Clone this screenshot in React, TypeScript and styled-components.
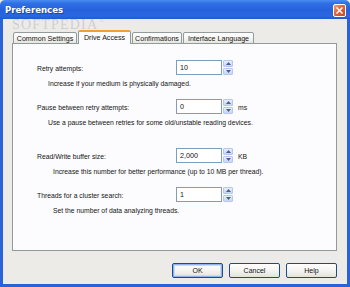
import React from "react";
import styled, { createGlobalStyle } from "styled-components";

const GlobalStyle = createGlobalStyle`
  html, body {
    margin: 0;
    padding: 0;
    background: #ecebe8;
  }
  * {
    box-sizing: border-box;
  }
`;

const Window = styled.div`
  position: relative;
  width: 350px;
  height: 287px;
  display: flex;
  flex-direction: column;
  font-family: "Liberation Sans", Arial, sans-serif;
  font-size: 6.8px;
  color: #151515;
  overflow: hidden;
`;

const TitleBar = styled.div`
  height: 19px;
  flex-shrink: 0;
  display: flex;
  align-items: center;
  justify-content: space-between;
  padding: 0 4px 0 5px;
  background: linear-gradient(
    to bottom,
    #4a8cf0 0%,
    #2f70e6 18%,
    #2662dc 50%,
    #2a66de 85%,
    #2358cf 100%
  );
  border-radius: 5px 5px 0 0;
`;

const Title = styled.span`
  color: #ffffff;
  font-family: "DejaVu Sans", "Liberation Sans", sans-serif;
  font-weight: bold;
  font-size: 8.6px;
  line-height: 10px;
  text-shadow: 1px 1px 0 #1d43a0;
`;

const CloseButton = styled.div`
  width: 13px;
  height: 13px;
  flex-shrink: 0;
  border: 1px solid #ffffff;
  border-radius: 2px;
  background: linear-gradient(135deg, #f0a080 0%, #e0643a 45%, #c84820 100%);
  display: flex;
  align-items: center;
  justify-content: center;
  margin-top: 1px;
`;

const Watermark = styled.div`
  position: absolute;
  left: 12px;
  top: 16px;
  font-family: "Liberation Serif", serif;
  font-size: 14px;
  line-height: 11px;
  letter-spacing: 1.2px;
  color: rgba(170, 170, 175, 0.45);
  pointer-events: none;
  sup {
    font-size: 6px;
    margin-left: 1px;
  }
`;

const Body = styled.div`
  flex: 1;
  display: flex;
  flex-direction: column;
  padding: 11px 10px 0 9px;
  border-left: 3px solid #2a63d8;
  border-right: 3px solid #2a63d8;
  border-bottom: 3px solid #2a63d8;
  background: #ecebe8;
`;

const TabRow = styled.div`
  display: flex;
  align-items: flex-end;
  gap: 1px;
  padding-left: 1px;
  height: 14px;
  margin-bottom: -1px;
  position: relative;
  z-index: 1;
`;

const Tab = styled.div<{ $active?: boolean; $width: number }>`
  width: ${(p) => p.$width}px;
  height: ${(p) => (p.$active ? 14 : 12)}px;
  display: flex;
  align-items: center;
  justify-content: center;
  font-size: 7.1px;
  border: 1px solid #919b9c;
  border-bottom: ${(p) => (p.$active ? "none" : "1px solid #919b9c")};
  border-top: ${(p) => (p.$active ? "2px solid #f0a030" : "1px solid #919b9c")};
  border-radius: 2px 2px 0 0;
  background: ${(p) =>
    p.$active
      ? "#fcfcfe"
      : "linear-gradient(to bottom, #ffffff 0%, #f4f4f0 60%, #e6e6e0 100%)"};
  padding-top: ${(p) => (p.$active ? 0 : 1)}px;
  white-space: nowrap;
`;

const Panel = styled.div`
  height: 208px;
  border: 1px solid #919b9c;
  background: #fcfcfe;
  padding: 16px 0 0 24px;
  display: flex;
  flex-direction: column;
`;

const Group = styled.div<{ $gap: number }>`
  margin-top: ${(p) => p.$gap}px;
  display: flex;
  flex-direction: column;
`;

const Row = styled.div`
  display: flex;
  align-items: center;
  height: 15px;
`;

const Label = styled.span`
  width: 139px;
  flex-shrink: 0;
  padding-top: 1px;
`;

const Input = styled.div`
  width: 46px;
  height: 15px;
  border: 1px solid #7f9db9;
  background: #ffffff;
  display: flex;
  align-items: center;
  padding-left: 3px;
  font-size: 7.2px;
`;

const Spinner = styled.div`
  width: 10px;
  height: 15px;
  margin-left: 1px;
  display: flex;
  flex-direction: column;
  gap: 1px;
`;

const SpinHalf = styled.div`
  flex: 1;
  border: 1px solid #b6c8ee;
  border-radius: 1px;
  background: linear-gradient(to bottom, #e8effd 0%, #c6d5f6 100%);
  display: flex;
  align-items: center;
  justify-content: center;
`;

const Unit = styled.span`
  margin-left: 5px;
  padding-top: 1px;
`;

const Hint = styled.div<{ $indent: number }>`
  margin-top: 4px;
  padding-left: ${(p) => p.$indent}px;
  line-height: 10px;
  white-space: nowrap;
`;

const ButtonRow = styled.div`
  display: flex;
  justify-content: flex-end;
  gap: 6px;
  margin-top: 12px;
`;

const Button = styled.div<{ $default?: boolean }>`
  width: 51px;
  height: 15px;
  border: 1px solid #1e4a86;
  border-radius: 2px;
  font-size: 7px;
  background: linear-gradient(to bottom, #ffffff 0%, #f5f4f0 50%, #e3e2da 100%);
  display: flex;
  align-items: center;
  justify-content: center;
  box-shadow: ${(p) =>
    p.$default ? "inset 0 0 0 1px #8fb3f0, inset 0 0 0 2px #c9dbfb" : "none"};
`;

const Arrow = ({ up }: { up?: boolean }) => (
  <svg width="5" height="3" viewBox="0 0 5 3">
    <polygon
      points={up ? "0,3 2.5,0 5,3" : "0,0 2.5,3 5,0"}
      fill="#4d6185"
    />
  </svg>
);

type Setting = {
  label: string;
  value: string;
  unit?: string;
  hint: string;
  indent: number;
  gap: number;
};

const settings: Setting[] = [
  {
    label: "Retry attempts:",
    value: "10",
    hint: "Increase if your medium is physically damaged.",
    indent: 11,
    gap: 0,
  },
  {
    label: "Pause between retry attempts:",
    value: "0",
    unit: "ms",
    hint: "Use a pause between retries for some old/unstable reading devices.",
    indent: 11,
    gap: 10,
  },
  {
    label: "Read/Write buffer size:",
    value: "2,000",
    unit: "KB",
    hint: "Increase this number for better performance (up to 10 MB per thread).",
    indent: 16,
    gap: 20,
  },
  {
    label: "Threads for a cluster search:",
    value: "1",
    hint: "Set the number of data analyzing threads.",
    indent: 16,
    gap: 10,
  },
];

const tabs = [
  { name: "Common Settings", width: 64 },
  { name: "Drive Access", width: 53, active: true },
  { name: "Confirmations", width: 50 },
  { name: "Interface Language", width: 71 },
];

export default function App() {
  return (
    <>
      <GlobalStyle />
      <Window>
        <TitleBar>
          <Title>Preferences</Title>
          <CloseButton>
            <svg width="7" height="7" viewBox="0 0 7 7">
              <path
                d="M1 1 L6 6 M6 1 L1 6"
                stroke="#ffffff"
                strokeWidth="1.5"
                strokeLinecap="square"
              />
            </svg>
          </CloseButton>
        </TitleBar>
        <Body>
          <TabRow>
            {tabs.map((t) => (
              <Tab key={t.name} $width={t.width} $active={t.active}>
                {t.name}
              </Tab>
            ))}
          </TabRow>
          <Panel>
            {settings.map((s) => (
              <Group key={s.label} $gap={s.gap}>
                <Row>
                  <Label>{s.label}</Label>
                  <Input>{s.value}</Input>
                  <Spinner>
                    <SpinHalf>
                      <Arrow up />
                    </SpinHalf>
                    <SpinHalf>
                      <Arrow />
                    </SpinHalf>
                  </Spinner>
                  {s.unit && <Unit>{s.unit}</Unit>}
                </Row>
                <Hint $indent={s.indent}>{s.hint}</Hint>
              </Group>
            ))}
          </Panel>
          <ButtonRow>
            <Button $default>OK</Button>
            <Button>Cancel</Button>
            <Button>Help</Button>
          </ButtonRow>
        </Body>
        <Watermark>
          SOFTPEDIA<sup>®</sup>
        </Watermark>
      </Window>
    </>
  );
}
